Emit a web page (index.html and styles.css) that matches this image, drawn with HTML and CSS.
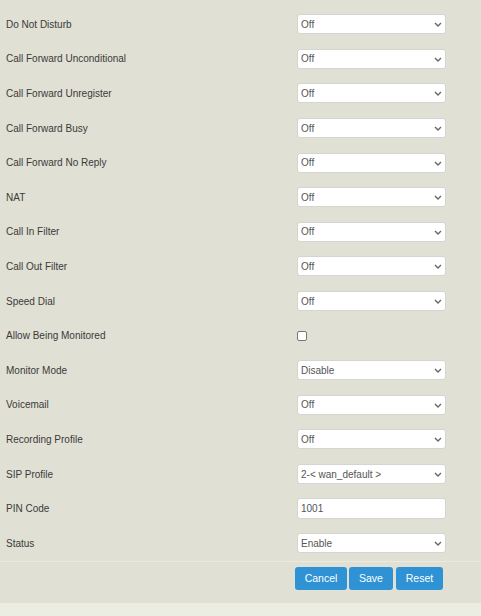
FILE: index.html
```html
<!DOCTYPE html>
<html>
<head>
<meta charset="utf-8">
<link rel="stylesheet" href="styles.css">
</head>
<body>
<div class="page">
  <form class="form">
    <div class="row"><label class="lbl">Do Not Disturb</label><div class="ctl"><div class="sel"><select><option>Off</option></select><svg class="chev" viewBox="0 0 8 5" width="8" height="5"><path d="M1 1 L4 4 L7 1" fill="none" stroke="#666" stroke-width="1.4"/></svg></div></div></div>
    <div class="row"><label class="lbl">Call Forward Unconditional</label><div class="ctl"><div class="sel"><select><option>Off</option></select><svg class="chev" viewBox="0 0 8 5" width="8" height="5"><path d="M1 1 L4 4 L7 1" fill="none" stroke="#666" stroke-width="1.4"/></svg></div></div></div>
    <div class="row"><label class="lbl">Call Forward Unregister</label><div class="ctl"><div class="sel"><select><option>Off</option></select><svg class="chev" viewBox="0 0 8 5" width="8" height="5"><path d="M1 1 L4 4 L7 1" fill="none" stroke="#666" stroke-width="1.4"/></svg></div></div></div>
    <div class="row"><label class="lbl">Call Forward Busy</label><div class="ctl"><div class="sel"><select><option>Off</option></select><svg class="chev" viewBox="0 0 8 5" width="8" height="5"><path d="M1 1 L4 4 L7 1" fill="none" stroke="#666" stroke-width="1.4"/></svg></div></div></div>
    <div class="row"><label class="lbl">Call Forward No Reply</label><div class="ctl"><div class="sel"><select><option>Off</option></select><svg class="chev" viewBox="0 0 8 5" width="8" height="5"><path d="M1 1 L4 4 L7 1" fill="none" stroke="#666" stroke-width="1.4"/></svg></div></div></div>
    <div class="row"><label class="lbl">NAT</label><div class="ctl"><div class="sel"><select><option>Off</option></select><svg class="chev" viewBox="0 0 8 5" width="8" height="5"><path d="M1 1 L4 4 L7 1" fill="none" stroke="#666" stroke-width="1.4"/></svg></div></div></div>
    <div class="row"><label class="lbl">Call In Filter</label><div class="ctl"><div class="sel"><select><option>Off</option></select><svg class="chev" viewBox="0 0 8 5" width="8" height="5"><path d="M1 1 L4 4 L7 1" fill="none" stroke="#666" stroke-width="1.4"/></svg></div></div></div>
    <div class="row"><label class="lbl">Call Out Filter</label><div class="ctl"><div class="sel"><select><option>Off</option></select><svg class="chev" viewBox="0 0 8 5" width="8" height="5"><path d="M1 1 L4 4 L7 1" fill="none" stroke="#666" stroke-width="1.4"/></svg></div></div></div>
    <div class="row"><label class="lbl">Speed Dial</label><div class="ctl"><div class="sel"><select><option>Off</option></select><svg class="chev" viewBox="0 0 8 5" width="8" height="5"><path d="M1 1 L4 4 L7 1" fill="none" stroke="#666" stroke-width="1.4"/></svg></div></div></div>
    <div class="row"><label class="lbl">Allow Being Monitored</label><div class="ctl"><input type="checkbox" class="chk"></div></div>
    <div class="row"><label class="lbl">Monitor Mode</label><div class="ctl"><div class="sel"><select><option>Disable</option></select><svg class="chev" viewBox="0 0 8 5" width="8" height="5"><path d="M1 1 L4 4 L7 1" fill="none" stroke="#666" stroke-width="1.4"/></svg></div></div></div>
    <div class="row"><label class="lbl">Voicemail</label><div class="ctl"><div class="sel"><select><option>Off</option></select><svg class="chev" viewBox="0 0 8 5" width="8" height="5"><path d="M1 1 L4 4 L7 1" fill="none" stroke="#666" stroke-width="1.4"/></svg></div></div></div>
    <div class="row"><label class="lbl">Recording Profile</label><div class="ctl"><div class="sel"><select><option>Off</option></select><svg class="chev" viewBox="0 0 8 5" width="8" height="5"><path d="M1 1 L4 4 L7 1" fill="none" stroke="#666" stroke-width="1.4"/></svg></div></div></div>
    <div class="row"><label class="lbl">SIP Profile</label><div class="ctl"><div class="sel"><select><option>2-&lt; wan_default &gt;</option></select><svg class="chev" viewBox="0 0 8 5" width="8" height="5"><path d="M1 1 L4 4 L7 1" fill="none" stroke="#666" stroke-width="1.4"/></svg></div></div></div>
    <div class="row"><label class="lbl">PIN Code</label><div class="ctl"><input type="text" class="txt" value="1001"></div></div>
    <div class="row"><label class="lbl">Status</label><div class="ctl"><div class="sel"><select><option>Enable</option></select><svg class="chev" viewBox="0 0 8 5" width="8" height="5"><path d="M1 1 L4 4 L7 1" fill="none" stroke="#666" stroke-width="1.4"/></svg></div></div></div>
    <div class="actions">
      <button type="button" class="btn btn-cancel">Cancel</button>
      <button type="button" class="btn btn-save">Save</button>
      <button type="button" class="btn btn-reset">Reset</button>
    </div>
  </form>
  <div class="footer"></div>
</div>
</body>
</html>
```
FILE: styles.css
```css
html, body {
  margin: 0;
  padding: 0;
}
body {
  background: #e1e0d4;
  font-family: "Liberation Sans", Arial, sans-serif;
  font-size: 10px;
  color: #333;
  height: 616px;
  overflow: hidden;
}
.page {
  display: flex;
  flex-direction: column;
  height: 616px;
}
.form {
  padding-top: 7px;
  display: flex;
  flex-direction: column;
}
.row {
  height: 34.6px;
  display: flex;
  align-items: center;
}
.lbl {
  width: 297px;
  padding-left: 6px;
  box-sizing: border-box;
  color: #3a3a3a;
}
.ctl {
  width: 149px;
  display: flex;
  align-items: center;
}
.sel {
  position: relative;
  width: 149px;
  height: 20px;
}
.sel select {
  appearance: none;
  -webkit-appearance: none;
  width: 100%;
  height: 20px;
  margin: 0;
  border: 1px solid #d4d4d0;
  border-radius: 3px;
  background: #fff;
  font-family: "Liberation Sans", Arial, sans-serif;
  font-size: 10px;
  color: #555;
  padding: 0 3px;
  box-sizing: border-box;
  outline: none;
}
.chev {
  position: absolute;
  right: 4px;
  top: 8px;
  pointer-events: none;
}
.txt {
  width: 149px;
  height: 21px;
  margin: 0;
  border: 1px solid #d4d4d0;
  border-radius: 3px;
  background: #fff;
  font-family: "Liberation Sans", Arial, sans-serif;
  font-size: 10px;
  color: #555;
  padding: 0 3px;
  box-sizing: border-box;
  outline: none;
}
.chk {
  appearance: none;
  -webkit-appearance: none;
  width: 10px;
  height: 10px;
  margin: 0;
  border: 1px solid #777;
  border-radius: 2px;
  background: #fff;
  box-sizing: border-box;
}
.actions {
  border-top: 1px solid #ebeadf;
  padding: 5px 0 13px 295px;
  display: flex;
  gap: 2px;
}
.btn {
  height: 23px;
  border: none;
  border-radius: 3px;
  background: #2f92d4;
  color: #fff;
  font-family: "Liberation Sans", Arial, sans-serif;
  font-size: 10.5px;
  padding: 0;
  margin: 0;
}
.btn-cancel { width: 52px; }
.btn-save { width: 44px; }
.btn-reset { width: 47px; margin-left: 1px; }
.footer {
  flex: 1;
  background: #ebece2;
}
```
